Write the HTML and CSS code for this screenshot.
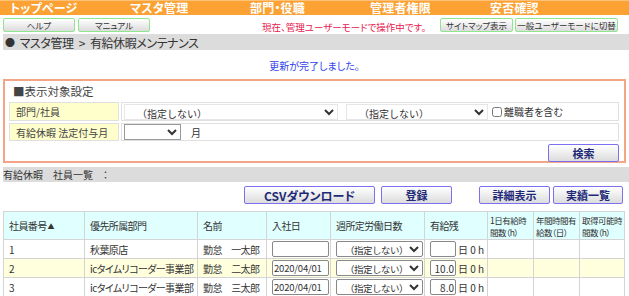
FILE: index.html
```html
<!DOCTYPE html>
<html lang="ja">
<head>
<meta charset="utf-8">
<link rel="stylesheet" href="styles.css">
</head>
<body>
<nav class="nav">
  <a class="nav-item">トップページ</a>
  <a class="nav-item">マスタ管理</a>
  <a class="nav-item">部門・役職</a>
  <a class="nav-item">管理者権限</a>
  <a class="nav-item">安否確認</a>
</nav>
<div class="toolbar">
  <button class="gbtn">ヘルプ</button>
  <button class="gbtn">マニュアル</button>
  <span class="mode">現在、管理ユーザーモードで操作中です。</span>
  <div class="toolbar-right">
    <button class="gbtn sitemap">サイトマップ表示</button>
    <button class="gbtn switch">一般ユーザーモードに切替</button>
  </div>
</div>
<div class="crumb"><span class="dot">●</span><span>マスタ管理</span><span class="sep">&gt;</span><span>有給休暇メンテナンス</span></div>
<div class="msg">更新が完了しました。</div>

<section class="search">
  <div class="search-title">■表示対象設定</div>
  <table class="form">
    <tr>
      <th>部門/社員</th>
      <td>
        <div class="form-row">
          <select class="sel sel-dept"><option>（指定しない）</option></select>
          <select class="sel sel-emp"><option>（指定しない）</option></select>
          <label class="chk"><input type="checkbox">離職者を含む</label>
        </div>
      </td>
    </tr>
    <tr>
      <th>有給休暇 法定付与月</th>
      <td>
        <div class="form-row">
          <select class="sel sel-month"><option></option></select>
          <span class="unit">月</span>
        </div>
      </td>
    </tr>
  </table>
  <div class="search-actions"><button class="pbtn search-btn">検索</button></div>
</section>

<div class="list-title">有給休暇　社員一覧　：</div>
<div class="actions">
  <button class="pbtn csv">CSVダウンロード</button>
  <button class="pbtn reg">登録</button>
  <button class="pbtn detail">詳細表示</button>
  <button class="pbtn result">実績一覧</button>
</div>

<table class="list">
  <colgroup>
    <col class="c1"><col class="c2"><col class="c3"><col class="c4"><col class="c5"><col class="c6"><col class="c7"><col class="c8"><col class="c9">
  </colgroup>
  <thead>
    <tr>
      <th>社員番号<span class="sort">▲</span></th>
      <th>優先所属部門</th>
      <th>名前</th>
      <th>入社日</th>
      <th>週所定労働日数</th>
      <th>有給残</th>
      <th class="narrow">1日有給時<br>間数（h）</th>
      <th class="narrow">年間時間有<br>給数（日）</th>
      <th class="narrow">取得可能時<br>間数（h）</th>
    </tr>
  </thead>
  <tbody>
    <tr>
      <td>1</td><td>秋葉原店</td><td>勤怠　一太郎</td>
      <td><input class="date" type="text" value=""></td>
      <td><select class="sel sel-week"><option>（指定しない）</option></select></td>
      <td><span class="remain"><input class="num" type="text" value=""> 日 0 h</span></td>
      <td></td><td></td><td></td>
    </tr>
    <tr class="alt">
      <td>2</td><td>icタイムリコーダー事業部</td><td>勤怠　二太郎</td>
      <td><input class="date" type="text" value="2020/04/01"></td>
      <td><select class="sel sel-week"><option>（指定しない）</option></select></td>
      <td><span class="remain"><input class="num" type="text" value="10.0"> 日 0 h</span></td>
      <td></td><td></td><td></td>
    </tr>
    <tr>
      <td>3</td><td>icタイムリコーダー事業部</td><td>勤怠　三太郎</td>
      <td><input class="date" type="text" value="2020/04/01"></td>
      <td><select class="sel sel-week"><option>（指定しない）</option></select></td>
      <td><span class="remain"><input class="num" type="text" value="8.0"> 日 0 h</span></td>
      <td></td><td></td><td></td>
    </tr>
    <tr class="alt">
      <td></td><td></td><td></td><td></td><td></td><td></td><td></td><td></td><td></td>
    </tr>
  </tbody>
</table>
</body>
</html>
```

FILE: styles.css
```css
* { box-sizing: border-box; }
html, body { margin: 0; padding: 0; }
body {
  width: 629px;
  height: 296px;
  overflow: hidden;
  background: #fff;
  font-family: "Noto Sans CJK JP", "Noto Sans", sans-serif;
  font-feature-settings: "palt";
  font-size: 10px;
  color: #333;
}

.nav {
  display: flex;
  align-items: center;
  height: 15px;
  background: #fca133;
  box-shadow: inset 0 1px 0 #fdc27a;
}
.nav-item {
  width: 120px;
  padding-left: 10px;
  color: #fff;
  font-weight: bold;
  font-size: 12px;
  line-height: 15px;
  letter-spacing: 0.2px;
  white-space: nowrap;
}

.toolbar {
  display: flex;
  align-items: flex-end;
  height: 19px;
  padding: 0 11px 2px 3px;
}
.gbtn {
  height: 14px;
  padding: 0;
  border: 1px solid #8ee68e;
  border-radius: 2px;
  background: linear-gradient(#ffffff, #dcdcdc);
  font-family: inherit;
  font-size: 8.5px;
  font-feature-settings: "palt";
  line-height: 12px;
  color: #333;
  width: 72px;
  margin-right: 3px;
  white-space: nowrap;
}
.mode {
  margin-left: 109px;
  color: #e8184e;
  font-size: 9.5px;
  line-height: 12px;
  margin-bottom: -1px;
  white-space: nowrap;
}
.toolbar-right { margin-left: auto; display: flex; }
.gbtn.sitemap { width: 73px; margin-right: 2px; }
.gbtn.switch { width: 103px; margin-right: 0; }

.crumb {
  display: flex;
  align-items: center;
  margin-left: 3px;
  height: 16px;
  background: #dcdcdc;
  padding-left: 2px;
  font-size: 12px;
  letter-spacing: -0.4px;
  color: #333;
  white-space: nowrap;
}
.crumb .dot { font-size: 10px; margin-right: 5px; }
.crumb .sep { margin: 0 5px; }

.msg {
  height: 29px;
  padding-top: 10px;
  text-align: center;
  color: #3344ee;
  font-size: 10px;
  line-height: 12px;
}

.search {
  margin-left: 3px;
  width: 623px;
  height: 84px;
  border: 2px solid #f4a487;
  padding: 3px 4px 0 2px;
}
.search-title {
  font-size: 11.5px;
  line-height: 15px;
  color: #444;
  padding-left: 6px;
  height: 16px;
}
.form {
  border-collapse: separate;
  border-spacing: 2px;
  width: 614px;
  margin: 0;
}
.form th, .form td {
  border: 1px solid #e0e0e0;
  font-weight: normal;
  text-align: left;
  padding: 0 0 0 2px;
  font-size: 10px;
}
.form th {
  width: 110px;
  background: #ffffcc;
  color: #444;
  padding-left: 6px;
}
.form tr:first-child th, .form tr:first-child td { height: 19px; }
.form tr:nth-child(2) th, .form tr:nth-child(2) td { height: 18px; }
.form-row { display: flex; align-items: center; }
.sel {
  height: 16px;
  font-family: inherit;
  font-size: 10px;
  color: #333;
  border: 1px solid #ccc;
  background: #fff;
  padding: 0 0 0 8px;
}
.sel-dept { width: 214px; border-color: #e6e6e6; }
.sel-emp { width: 142px; margin-left: 8px; border-color: #e6e6e6; }
.sel-month { width: 57px; border-color: #999; padding: 0; }
.unit { margin-left: 10px; }
.chk { display: flex; align-items: center; margin-left: 4px; }
.chk input { width: 10px; height: 10px; margin: 0 2px 0 0; }
.search-actions {
  display: flex;
  justify-content: flex-end;
  padding-right: 1px;
  margin-top: 1px;
}

.pbtn {
  height: 18px;
  border: 1px solid #7c6ff0;
  border-radius: 2px;
  background: linear-gradient(#ffffff, #dcdcdc);
  font-family: inherit;
  font-feature-settings: "palt";
  font-weight: bold;
  font-size: 11px;
  color: #1e2a78;
  padding: 0;
}
.search-btn { width: 71px; height: 18px; }

.list-title {
  margin: 4px 0 0 3px;
  height: 15px;
  background: #dcdcdc;
  font-size: 10px;
  line-height: 15px;
  color: #333;
  padding-left: 0;
}
.actions {
  display: flex;
  height: 29px;
  padding-top: 4px;
}
.csv { margin-left: 244px; width: 131px; font-size: 12px; }
.reg { margin-left: 6px; width: 71px; }
.detail { margin-left: 27px; width: 71px; }
.result { margin-left: 3px; width: 70px; }

.list {
  margin-left: 3px;
  width: 621px;
  table-layout: fixed;
  border-collapse: collapse;
  font-size: 10px;
  letter-spacing: -0.6px;
}
.c1 { width: 81px; }
.c2 { width: 113px; }
.c3 { width: 69px; }
.c4 { width: 64px; }
.c5 { width: 94px; }
.c6 { width: 63px; }
.c7 { width: 46px; }
.c8 { width: 46px; }
.c9 { width: 45px; }
.list th, .list td {
  border: 1px solid #d4d4d4;
  padding: 0 0 0 5px;
  text-align: left;
  font-weight: normal;
  color: #333;
  white-space: nowrap;
  overflow: hidden;
}
.list thead th {
  background: #e0ffff;
  height: 28px;
  line-height: 13px;
  padding-left: 5px;
}
.list thead th.narrow {
  padding: 2px 0 0 2px;
  font-size: 8.5px;
  letter-spacing: -0.5px;
  line-height: 12px;
  vertical-align: top;
}
.sort { font-size: 7px; margin-left: 1px; vertical-align: 1px; }
.list td { height: 19px; background: #fff; }
.list tr.alt td { background: #ffffdd; }
.date {
  width: 57px;
  height: 16px;
  border: 1px solid #888;
  border-radius: 2px;
  font-family: inherit;
  font-size: 9.5px;
  letter-spacing: -0.2px;
  padding: 0 1px;
  color: #333;
  background: #fff;
}
.sel-week { width: 87px; border: 1px solid #888; border-radius: 2px; padding-left: 4px; letter-spacing: -0.5px; font-size: 9.5px; }
.remain { display: inline-flex; align-items: center; white-space: nowrap; color: #333; letter-spacing: 0; }
.num {
  width: 26px;
  height: 16px;
  border: 1px solid #888;
  border-radius: 2px;
  font-family: inherit;
  font-size: 10px;
  text-align: right;
  padding: 0 1px;
  margin-right: 2px;
  color: #333;
  background: #fff;
}
```
